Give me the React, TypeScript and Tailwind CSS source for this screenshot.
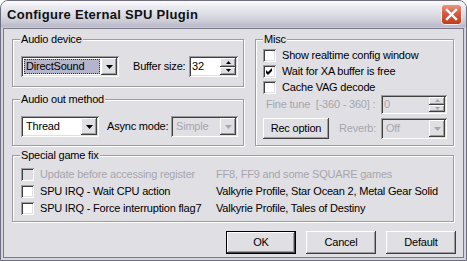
import React from "react";

const raised =
  "bg-[#e0dfe3] shadow-[inset_-1px_-1px_0_#404040,inset_1px_1px_0_#ffffff,inset_-2px_-2px_0_#9d9da1]";
const sunken =
  "shadow-[inset_1px_1px_0_#9d9da1,inset_-1px_-1px_0_#ffffff,inset_2px_2px_0_#404040,inset_-2px_-2px_0_#e0dfe3]";
const dis = "text-[#a6a6ae]";

function Tri({ w = 7, h = 4, up = false, disabled = false }: { w?: number; h?: number; up?: boolean; disabled?: boolean }) {
  const pts = up ? `0,${h} ${w},${h} ${w / 2},0` : `0,0 ${w},0 ${w / 2},${h}`;
  return (
    <svg width={w} height={h} viewBox={`0 0 ${w} ${h}`} className="block">
      <polygon points={pts} fill={disabled ? "#a6a6ae" : "#000"} />
    </svg>
  );
}

function Combo({
  className,
  text,
  disabled = false,
  selected = false,
}: {
  className: string;
  text: string;
  disabled?: boolean;
  selected?: boolean;
}) {
  return (
    <div className={`flex p-[2px] ${sunken} ${disabled ? "bg-[#e0dfe3]" : "bg-white"} ${className}`}>
      <div className="flex-1 flex p-[1px]">
        <div
          className={`flex-1 flex items-center pl-[2px] ${
            selected ? "bg-[#b4b4cb] outline-1 outline-dotted outline-[#303040] -outline-offset-1" : ""
          } ${disabled ? dis : ""}`}
        >
          {text}
        </div>
      </div>
      <div className={`w-[16px] flex items-center justify-center ${raised}`}>
        <Tri disabled={disabled} />
      </div>
    </div>
  );
}

function Spinner({ className, text, disabled = false }: { className: string; text: string; disabled?: boolean }) {
  return (
    <div className={`flex p-[2px] ${sunken} ${disabled ? "bg-[#e0dfe3]" : "bg-white"} ${className}`}>
      <div className={`flex-1 flex items-center pl-[1px] ${disabled ? dis : ""}`}>{text}</div>
      <div className="w-[16px] flex flex-col">
        <div className={`flex-1 flex items-center justify-center ${raised}`}>
          <Tri w={5} h={3} up disabled={disabled} />
        </div>
        <div className={`flex-1 flex items-center justify-center ${raised}`}>
          <Tri w={5} h={3} disabled={disabled} />
        </div>
      </div>
    </div>
  );
}

function Check({ checked = false, disabled = false }: { checked?: boolean; disabled?: boolean }) {
  return (
    <div className={`w-[13px] h-[13px] shrink-0 ${sunken} ${disabled ? "bg-[#e0dfe3]" : "bg-white"}`}>
      {checked && (
        <svg width="13" height="13" viewBox="0 0 13 13" className="block">
          <path d="M3 5 L5 7 L9 3 L9 6 L5 10 L3 8 Z" fill="#000" />
        </svg>
      )}
    </div>
  );
}

function Group({
  label,
  className,
  innerClassName,
  children,
}: {
  label: string;
  className: string;
  innerClassName: string;
  children: React.ReactNode;
}) {
  return (
    <div className={`relative pt-[7px] flex flex-col ${className}`}>
      <div
        className={`flex-1 border border-[#9d9da1] shadow-[inset_1px_1px_0_#ffffff,1px_1px_0_#ffffff] ${innerClassName}`}
      >
        {children}
      </div>
      <span className="absolute left-[8px] top-0 px-[1px] leading-[14px] bg-[#e0dfe3]">{label}</span>
    </div>
  );
}

function Button({ children, def = false, className = "" }: { children: React.ReactNode; def?: boolean; className?: string }) {
  return (
    <div className={`w-[70px] h-[23px] ${def ? "border border-black" : ""} ${className}`}>
      <div className={`w-full h-full flex items-center justify-center ${raised}`}>{children}</div>
    </div>
  );
}

function CloseBtn() {
  return (
    <svg width="21" height="21" viewBox="0 0 21 21" className="block">
      <defs>
        <linearGradient id="cg" x1="0" y1="0" x2="0" y2="1">
          <stop offset="0" stopColor="#eb9a86" />
          <stop offset="0.45" stopColor="#d75a3d" />
          <stop offset="1" stopColor="#c2391d" />
        </linearGradient>
      </defs>
      <rect x="0.5" y="0.5" width="20" height="20" rx="3" fill="url(#cg)" stroke="#f4f4f6" />
      <path d="M6 6 L15 15 M15 6 L6 15" stroke="#ffffff" strokeWidth="2.4" strokeLinecap="square" />
    </svg>
  );
}

export default function App() {
  return (
    <div className="w-[467px] h-[261px] flex flex-col rounded-t-[8px] border border-[#6e6e80] bg-[#d4d4de] overflow-hidden font-['Liberation_Sans',Arial,sans-serif] text-[11px] tracking-[-0.2px] text-black leading-none">
      <div className="h-[27px] shrink-0 flex items-center pl-[6px] pr-[4px] bg-[linear-gradient(to_bottom,#fdfdfe_0%,#ececf2_20%,#dcdce4_50%,#c8c8d4_80%,#b8b8c8_93%,#cfcfd9_100%)]">
        <span className="flex-1 font-bold text-[13px] tracking-[0.3px] text-[#111]">Configure Eternal SPU Plugin</span>
        <CloseBtn />
      </div>
      <div className="flex-1 mx-[2px] mb-[2px] border border-[#7a7a8c] bg-[#e0dfe3] flex flex-col pl-[8px] pr-[9px] pt-[3px]">
        <div className="flex gap-[11px] h-[114px]">
          <div className="w-[232px] flex flex-col gap-[5px]">
            <Group label="Audio device" className="h-[55px]" innerClassName="flex items-center pl-[8px] pr-[5px] pt-[16px] pb-[9px]">
              <Combo className="w-[98px] h-[21px]" text="DirectSound" selected />
              <span className="ml-[14px]">Buffer size:</span>
              <Spinner className="ml-auto w-[49px] h-[21px]" text="32" />
            </Group>
            <Group label="Audio out method" className="h-[54px]" innerClassName="flex items-center pl-[8px] pr-[5px] pt-[16px] pb-[8px]">
              <Combo className="w-[78px] h-[21px]" text="Thread" />
              <span className="ml-[8px]">Async mode:</span>
              <Combo className="ml-auto w-[67px] h-[21px]" text="Simple" disabled />
            </Group>
          </div>
          <Group label="Misc" className="flex-1" innerClassName="flex flex-col pl-[7px] pr-[6px] pt-[7px]">
            <div className="h-[16px] flex items-center gap-[6px]">
              <Check />
              <span>Show realtime config window</span>
            </div>
            <div className="h-[16px] flex items-center gap-[6px]">
              <Check checked />
              <span>Wait for XA buffer is free</span>
            </div>
            <div className="h-[16px] flex items-center gap-[6px]">
              <Check />
              <span>Cache VAG decode</span>
            </div>
            <div className="h-[19px] flex items-center">
              <span className={`ml-[3px] whitespace-pre ${dis}`}>Fine tune  [-360 - 360] :</span>
              <Spinner className="ml-auto w-[66px] h-[19px]" text="0" disabled />
            </div>
            <div className="mt-[4px] h-[21px] flex items-center">
              <div className={`w-[66px] h-[21px] flex items-center justify-center ${raised}`}>Rec option</div>
              <span className={`ml-[10px] ${dis}`}>Reverb:</span>
              <Combo className="ml-auto w-[66px] h-[21px]" text="Off" disabled />
            </div>
          </Group>
        </div>
        <Group label="Special game fix" className="mt-[2px] h-[74px]" innerClassName="flex flex-col pl-[8px] pt-[10px]">
          <div className="h-[17px] flex items-center">
            <div className="w-[195px] flex items-center gap-[6px]">
              <Check disabled />
              <span className={dis}>Update before accessing register</span>
            </div>
            <span className={dis}>FF8, FF9 and some SQUARE games</span>
          </div>
          <div className="h-[17px] flex items-center">
            <div className="w-[195px] flex items-center gap-[6px]">
              <Check />
              <span>SPU IRQ - Wait CPU action</span>
            </div>
            <span>Valkyrie Profile, Star Ocean 2, Metal Gear Solid</span>
          </div>
          <div className="h-[17px] flex items-center">
            <div className="w-[195px] flex items-center gap-[6px]">
              <Check />
              <span>SPU IRQ - Force interruption flag7</span>
            </div>
            <span>Valkyrie Profile, Tales of Destiny</span>
          </div>
        </Group>
        <div className="mt-[9px] -mr-[2px] flex justify-end gap-[10px]">
          <Button def>OK</Button>
          <Button>Cancel</Button>
          <Button>Default</Button>
        </div>
      </div>
    </div>
  );
}
